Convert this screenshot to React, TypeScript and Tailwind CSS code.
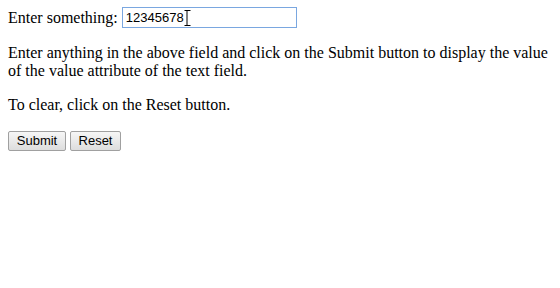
export default function App() {
  return (
    <div className="w-[560px] h-[288px] bg-white overflow-hidden px-2 pt-[7px] text-[16px] leading-[18px] text-black font-['Liberation_Serif',serif]">
      <div className="flex items-center h-[21px]">
        <span>Enter something:</span>
        <div className="ml-[4px] w-[175px] h-[21px] border border-[#7aa7e0] bg-white flex items-center pl-[3px] font-['Liberation_Sans',sans-serif] text-[13px] text-black">
          <span>12345678</span>
          <svg width="7" height="16" viewBox="0 0 7 16">
            <path d="M0.5 0.5h2.5v15h-2.5M6.5 0.5h-3.5M6.5 15.5h-3.5" fill="none" stroke="#000" strokeWidth="1" />
          </svg>
        </div>
      </div>
      <p className="mt-[16px] w-[548px] leading-[18px]">
        Enter anything in the above field and click on the Submit button to display the value of the value attribute of the text field.
      </p>
      <p className="mt-[16px]">To clear, click on the Reset button.</p>
      <div className="flex gap-[4px] mt-[17px] font-['Liberation_Sans',sans-serif] text-[13px]">
        <button className="h-[20px] w-[58px] border border-[#a0a0a0] rounded-[2px] bg-gradient-to-b from-[#f6f6f6] to-[#dddddd] flex items-center justify-center">Submit</button>
        <button className="h-[20px] w-[51px] border border-[#a0a0a0] rounded-[2px] bg-gradient-to-b from-[#f6f6f6] to-[#dddddd] flex items-center justify-center">Reset</button>
      </div>
    </div>
  );
}
